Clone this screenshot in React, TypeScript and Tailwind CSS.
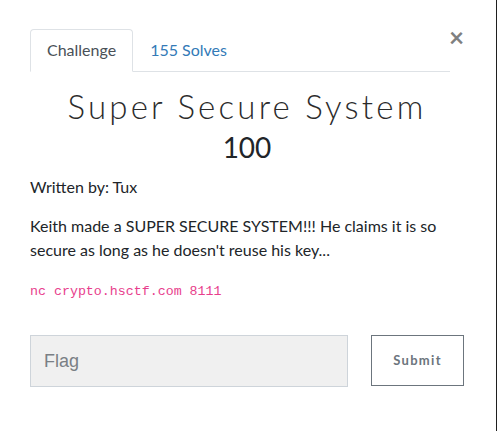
import React from "react";

export default function App() {
  return (
    <div className="flex w-[497px] h-[431px] bg-white overflow-hidden" style={{ fontFamily: "Lato, 'Noto Sans', sans-serif" }}>
      <div className="relative min-w-0 flex-1">
        <button className="absolute left-[449px] top-[24px] text-[26px] font-bold leading-none text-[#808080]">×</button>
        <div className="pt-[29px] pl-[30px] pr-[46px]">
          <ul className="flex border-b border-[#dee2e6] text-[16px] leading-[24px]">
            <li className="-mb-px rounded-t-[4px] border border-[#dee2e6] border-b-white bg-white px-4 py-2 text-[#495057]">Challenge</li>
            <li className="px-4 py-2 text-[#337ab7] border border-transparent">155 Solves</li>
          </ul>
          <div className="-mr-[14px]">
            <h3 className="mt-[14px] whitespace-nowrap text-center text-[33px] font-light leading-[40px] tracking-[3.2px] text-[#2b2b2b]">Super Secure System</h3>
            <h4 className="mt-[3px] text-center text-[28px] leading-[36px] text-[#212529]">100</h4>
          </div>
          <p className="mt-[10px] text-[16px] leading-[24px] text-[#212529]">Written by: Tux</p>
          <p className="mt-[15px] text-[16px] leading-[24px] text-[#212529]">Keith made a SUPER SECURE SYSTEM!!! He claims it is so secure as long as he doesn't reuse his key...</p>
          <p className="mt-[20px] text-[13.3px] leading-[20px] text-[#e83e8c]" style={{ fontFamily: "'Liberation Mono', monospace" }}>nc crypto.hsctf.com 8111</p>
          <div className="mt-[33px] flex items-start whitespace-nowrap">
            <div className="flex h-[52px] w-[318px] shrink-0 items-center border border-[#ced4da] bg-[#f0f0f0] pl-[13px] text-[18px] text-[#7a7f85]" style={{ fontFamily: "'Liberation Sans', Arial, sans-serif" }}>Flag</div>
            <button className="ml-[23px] flex h-[51px] w-[93px] shrink-0 items-center justify-center border border-[#6c757d] text-[13px] font-bold tracking-[1.3px] text-[#6c757d]">Submit</button>
          </div>
        </div>
      </div>
      <div className="w-px bg-[#1f1f1f]" />
    </div>
  );
}
